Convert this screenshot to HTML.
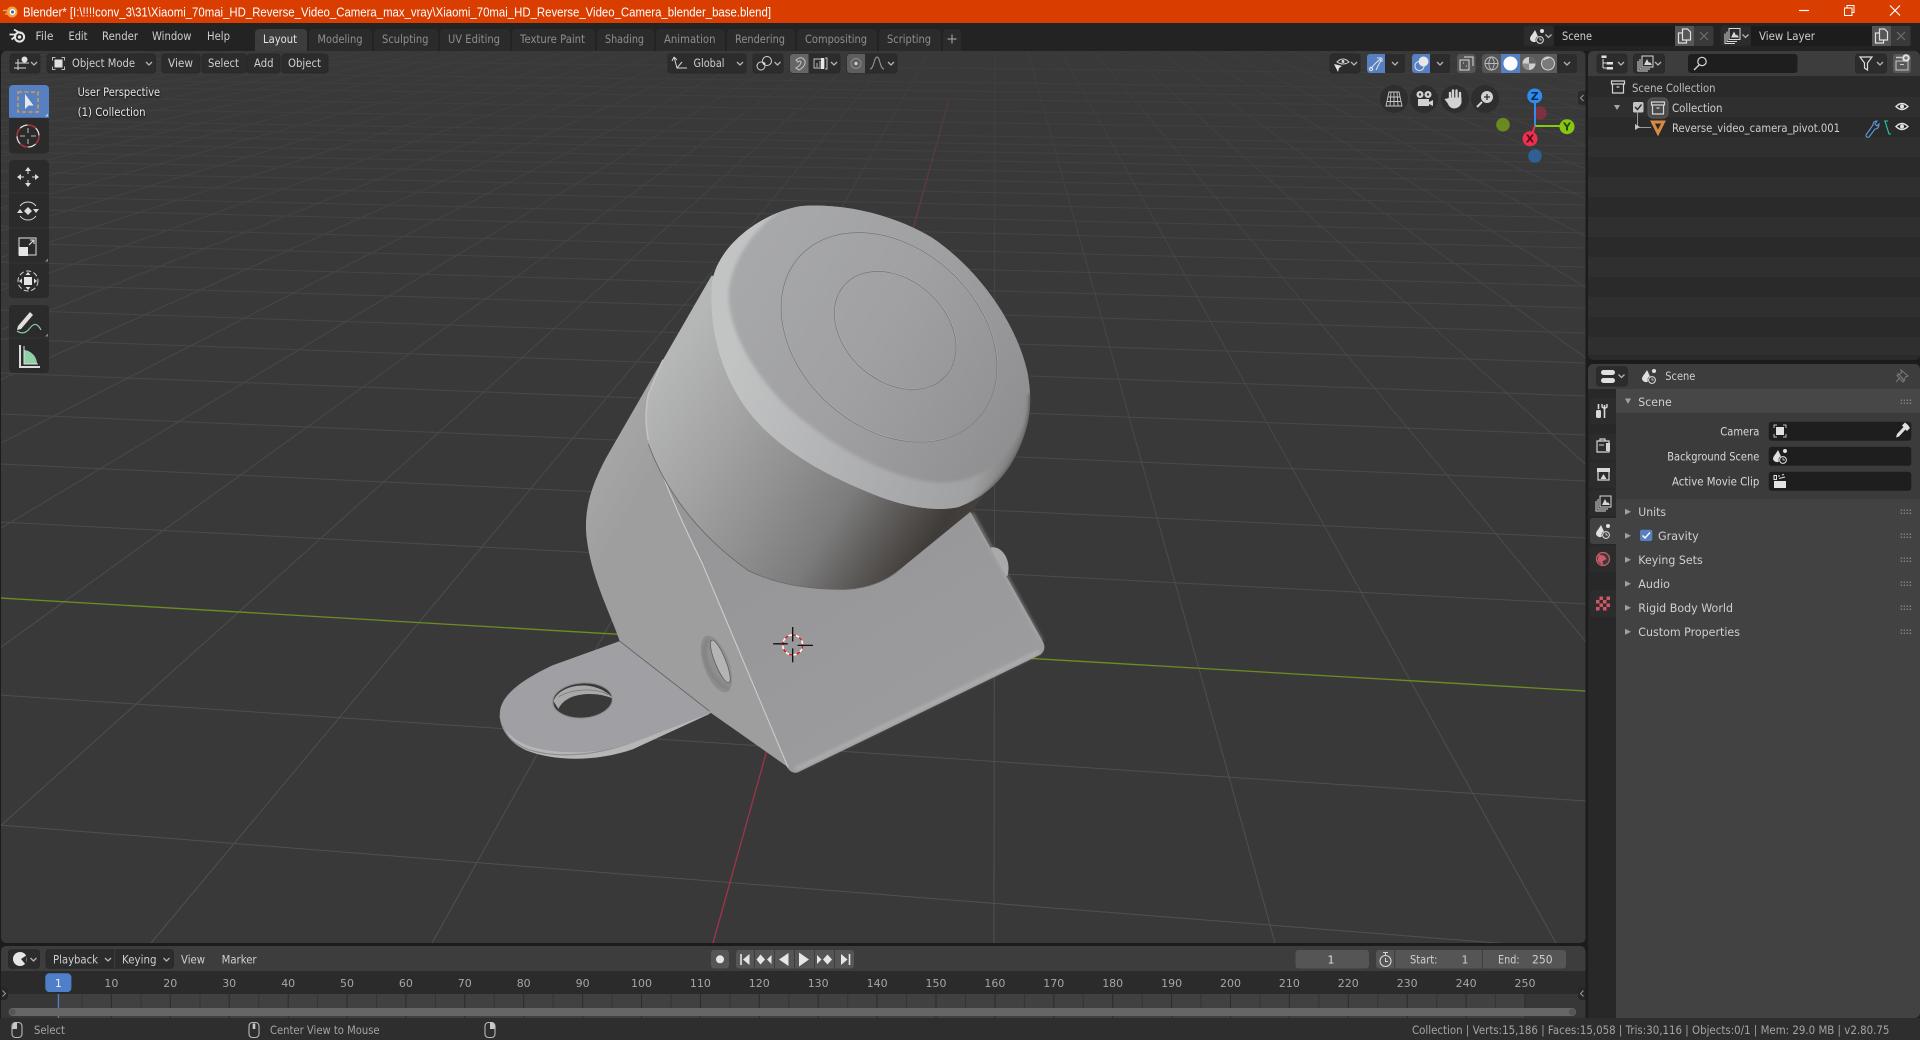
<!DOCTYPE html>
<html><head><meta charset="utf-8"><title>Blender</title>
<style>
html,body{margin:0;padding:0;background:#1c1c1c;width:1920px;height:1040px;overflow:hidden}
svg{display:block}
text{font-family:"DejaVu Sans","Liberation Sans",sans-serif;font-size:11.5px;fill:#cfcfcf}
.t{fill:#8e8e8e}
.f{fill:#a6a6a6;font-size:11px;text-anchor:middle}
.s{fill:#a4a4a4}
.l{filter:drop-shadow(0 1px 1px #000);fill:#e6e6e6}
.ax{font-size:11px;font-weight:bold;text-anchor:middle}
.ic{fill:none;stroke:#d8d8d8;stroke-width:1.3}
.b{fill:#2c2c2c;stroke:#292929}
</style></head><body>
<svg xmlns="http://www.w3.org/2000/svg" width="1920" height="1040" viewBox="0 0 1920 1040">
<defs>
<clipPath id="vp"><rect x="1" y="51" width="1584.5" height="892" rx="5"/></clipPath>
<clipPath id="capc"><path d="M840 68C950 60 1080 90 1180 150C1300 230 1400 370 1430 500C1445 580 1440 640 1400 720C1370 780 1320 830 1250 855C1180 870 1090 850 1000 810C880 760 760 690 690 590C630 500 600 400 605 280C610 180 730 85 840 68Z"/></clipPath>
<linearGradient id="gr" gradientUnits="userSpaceOnUse" x1="0" y1="51" x2="0" y2="943"><stop offset="0" stop-color="#3d3d3d"/><stop offset=".25" stop-color="#454545"/><stop offset=".6" stop-color="#4c4c4c"/><stop offset="1" stop-color="#505050"/></linearGradient>
<linearGradient id="red" gradientUnits="userSpaceOnUse" x1="0" y1="90" x2="0" y2="943"><stop offset="0" stop-color="#4a3a3d"/><stop offset=".2" stop-color="#71383f"/><stop offset="1" stop-color="#a8324c"/></linearGradient>
<linearGradient id="cyl" gradientUnits="userSpaceOnUse" x1="470" y1="520" x2="1225" y2="1007"><stop offset="0" stop-color="#b5b6b6"/><stop offset=".25" stop-color="#a3a3a3"/><stop offset=".45" stop-color="#919191"/><stop offset=".65" stop-color="#7c7c7c"/><stop offset=".82" stop-color="#555250"/><stop offset=".92" stop-color="#3e3b38"/><stop offset="1" stop-color="#47433f"/></linearGradient>
<linearGradient id="rim" gradientUnits="userSpaceOnUse" x1="640" y1="500" x2="1430" y2="760"><stop offset="0" stop-color="#c2c4c4"/><stop offset=".5" stop-color="#aeafb1"/><stop offset=".85" stop-color="#a0a1a2"/><stop offset="1" stop-color="#6e6c6b"/></linearGradient>
<linearGradient id="top" gradientUnits="userSpaceOnUse" x1="680" y1="250" x2="1380" y2="680"><stop offset="0" stop-color="#a7a8aa"/><stop offset=".5" stop-color="#a0a0a2"/><stop offset="1" stop-color="#909092"/></linearGradient>
<linearGradient id="bk" gradientUnits="userSpaceOnUse" x1="280" y1="750" x2="420" y2="830"><stop offset="0" stop-color="#919192"/><stop offset=".15" stop-color="#a6a6a7"/><stop offset="1" stop-color="#9e9e9f"/></linearGradient>
<linearGradient id="pl" gradientUnits="userSpaceOnUse" x1="800" y1="1000" x2="1100" y2="1500"><stop offset="0" stop-color="#979799"/><stop offset="1" stop-color="#9c9c9e"/></linearGradient>
<filter id="bl" x="-20%" y="-20%" width="140%" height="140%"><feGaussianBlur stdDeviation="5"/></filter>
<g id="ch"><path d="M-3-1.5 0 1.5 3-1.5" fill="none" stroke="#b4b4b4" stroke-width="1.3"/></g>
<g id="eye"><path d="M-6 0Q0-6 6 0Q0 6-6 0Z" fill="none" stroke="#e2e2e2" stroke-width="1.4"/><circle r="2" fill="#e2e2e2"/></g>
<g id="scn"><path d="M-2-6C-4-2-7 0-7 3A4 4 0 0 0-1 5.5C-2 3-1 1 1 .5C0-2-1-4-2-6Z" fill="#e0e0e0"/><circle cx="5" cy="-5" r="2" fill="#e0e0e0"/><circle cx="3" cy="4" r="3.4" fill="none" stroke="#e0e0e0"/><path d="M3 2V4H5" fill="none" stroke="#e0e0e0" stroke-width=".8"/></g>
<g id="coll"><path d="M-6.5-6H6.5V-3H-6.5ZM-5.5-3V6H5.5V-3M-1.5 0H1.5" fill="none" stroke="#d4d4d4" stroke-width="1.2"/></g>
<g id="vl"><path d="M-4-7H7V4H-4Z" fill="none" stroke="#d8d8d8"/><path d="M-6-4V6H4M-8-2V8H2" fill="none" stroke="#d8d8d8"/><path d="M-2 2 1-4 3 0 4-1 6 2Z" fill="#d8d8d8"/></g>
<g id="copy"><path d="M-2-7H3L6-4V4H-2ZM-2-3H-6V7H2V4" fill="none" stroke="#e0e0e0" stroke-width="1.2"/></g>
<g id="x"><path d="M-4-4 4 4M4-4-4 4" stroke="#6e6e6e" stroke-width="1.2"/></g>
<g id="obj"><rect x="-4" y="-4" width="8" height="8" fill="#e0e0e0"/><path d="M-6-3V-6H-3M3-6H6V-3M6 3V6H3M-3 6H-6V3" fill="none" stroke="#bdbdbd"/></g>
<g id="gp"><path d="M0 -1.5H10.5M0 1.5H10.5" stroke="#828282" stroke-width="1.5" stroke-dasharray="1.4 1.6"/></g>
<g id="mouse"><rect x="-5" y="-7.5" width="10" height="15" rx="3.5" fill="none" stroke="#b8b8b8" stroke-width="1.1"/></g>
</defs>

<rect width="1920" height="1040" fill="#1c1c1c"/>
<!-- title bar -->
<rect width="1920" height="23" fill="#da3d00"/>
<circle cx="12" cy="12" r="5.5" fill="#f0a040"/><circle cx="12.5" cy="12" r="3" fill="#fff"/><circle cx="12.5" cy="12" r="1.6" fill="#2a6fc0"/><path d="M3 10.5H8M5 14H8" stroke="#f0a040" stroke-width="1.4"/>
<text x="23" y="16.5" textLength="748" lengthAdjust="spacingAndGlyphs" style="font-family:'Liberation Sans',sans-serif;font-size:12.5px;fill:#fff">Blender* [I:\!!!!conv_3\31\Xiaomi_70mai_HD_Reverse_Video_Camera_max_vray\Xiaomi_70mai_HD_Reverse_Video_Camera_blender_base.blend]</text>
<path d="M1799 10.5H1809" stroke="#fff" stroke-width="1.2"/>
<path d="M1844.5 8H1852V15.5H1844.5ZM1847 8V5.5H1854V12.5H1852" fill="none" stroke="#fff"/>
<path d="M1890 5.5 1900 15.5M1900 5.5 1890 15.5" stroke="#fff" stroke-width="1.2"/>

<!-- top bar -->
<rect y="23" width="1920" height="28" fill="#232323"/>
<g fill="none" stroke="#e6e6e6"><circle cx="19.5" cy="37" r="4.6" stroke-width="2"/><path d="M9.5 34.5H16M11.5 39.5 16 36M14 29.5 21 33.5" stroke-width="1.8"/></g><circle cx="19.5" cy="37" r="1.8" fill="#e6e6e6"/>
<text x="35.5" y="40" textLength="18" lengthAdjust="spacingAndGlyphs">File</text>
<text x="68.5" y="40" textLength="19" lengthAdjust="spacingAndGlyphs">Edit</text>
<text x="102" y="40" textLength="36" lengthAdjust="spacingAndGlyphs">Render</text>
<text x="152" y="40" textLength="39.5" lengthAdjust="spacingAndGlyphs">Window</text>
<text x="207" y="40" textLength="23" lengthAdjust="spacingAndGlyphs">Help</text>
<g fill="#2b2b2b">
<path d="M255 51V33a4 4 0 0 1 4-4H303a4 4 0 0 1 4 4V51Z" fill="#3d3d3d"/>
<path d="M309 51V33a4 4 0 0 1 4-4H368a4 4 0 0 1 4 4V51Z"/>
<path d="M374 51V33a4 4 0 0 1 4-4H434a4 4 0 0 1 4 4V51Z"/>
<path d="M440 51V33a4 4 0 0 1 4-4H506a4 4 0 0 1 4 4V51Z"/>
<path d="M512 51V33a4 4 0 0 1 4-4H591a4 4 0 0 1 4 4V51Z"/>
<path d="M597 51V33a4 4 0 0 1 4-4H650a4 4 0 0 1 4 4V51Z"/>
<path d="M656 51V33a4 4 0 0 1 4-4H721a4 4 0 0 1 4 4V51Z"/>
<path d="M727 51V33a4 4 0 0 1 4-4H791a4 4 0 0 1 4 4V51Z"/>
<path d="M797 51V33a4 4 0 0 1 4-4H873a4 4 0 0 1 4 4V51Z"/>
<path d="M879 51V33a4 4 0 0 1 4-4H937a4 4 0 0 1 4 4V51Z"/>
<path d="M943 51V33a4 4 0 0 1 4-4H957a4 4 0 0 1 4 4V51Z"/>
</g>
<text x="263" y="43" textLength="34" lengthAdjust="spacingAndGlyphs" style="fill:#e4e4e4">Layout</text>
<text class="t" x="317.5" y="43" textLength="45" lengthAdjust="spacingAndGlyphs">Modeling</text>
<text class="t" x="382" y="43" textLength="46.5" lengthAdjust="spacingAndGlyphs">Sculpting</text>
<text class="t" x="448" y="43" textLength="52" lengthAdjust="spacingAndGlyphs">UV Editing</text>
<text class="t" x="520" y="43" textLength="65" lengthAdjust="spacingAndGlyphs">Texture Paint</text>
<text class="t" x="605" y="43" textLength="39" lengthAdjust="spacingAndGlyphs">Shading</text>
<text class="t" x="664" y="43" textLength="51.5" lengthAdjust="spacingAndGlyphs">Animation</text>
<text class="t" x="735" y="43" textLength="50" lengthAdjust="spacingAndGlyphs">Rendering</text>
<text class="t" x="805" y="43" textLength="62" lengthAdjust="spacingAndGlyphs">Compositing</text>
<text class="t" x="887" y="43" textLength="44" lengthAdjust="spacingAndGlyphs">Scripting</text>
<path d="M947.5 39H956.5M952 34.5V43.5" stroke="#9a9a9a" stroke-width="1.2"/>

<!-- scene / view layer -->
<rect x="1524" y="26" width="30" height="20" rx="3" class="b"/><use href="#scn" x="1537" y="36"/><use href="#ch" x="1548.5" y="36"/>
<rect x="1554" y="26" width="121" height="20" fill="#1c1c1c"/>
<text x="1562" y="40" textLength="30" lengthAdjust="spacingAndGlyphs">Scene</text>
<rect x="1675" y="26" width="19" height="20" fill="#565656"/><use href="#copy" x="1684.5" y="36"/>
<rect x="1694" y="26" width="19.5" height="20" rx="2" fill="#3a3a3a"/><use href="#x" x="1704" y="36"/>
<rect x="1721" y="26" width="30" height="20" rx="3" class="b"/><use href="#vl" x="1733" y="35.5"/><use href="#ch" x="1745.5" y="36"/>
<rect x="1751" y="26" width="121" height="20" fill="#1c1c1c"/>
<text x="1759" y="40" textLength="56" lengthAdjust="spacingAndGlyphs">View Layer</text>
<rect x="1872" y="26" width="19" height="20" fill="#565656"/><use href="#copy" x="1881.5" y="36"/>
<rect x="1891" y="26" width="19.5" height="20" rx="2" fill="#3a3a3a"/><use href="#x" x="1901" y="36"/>

<!-- 3D viewport -->
<rect x="1" y="51" width="1584.5" height="892" rx="5" fill="#393939"/>
<g clip-path="url(#vp)">
<path fill="none" stroke="url(#gr)" stroke-width="1" d="M995-67L-8560 943M995-67L-8279 943M995-67L-7998 943M995-67L-7717 943M995-67L-7436 943M995-67L-7155 943M995-67L-6874 943M995-67L-6593 943M995-67L-6312 943M995-67L-6031 943M995-67L-5750 943M995-67L-5469 943M995-67L-5188 943M995-67L-4907 943M995-67L-4626 943M995-67L-4345 943M995-67L-4064 943M995-67L-3783 943M995-67L-3502 943M995-67L-3221 943M995-67L-2940 943M995-67L-2659 943M995-67L-2378 943M995-67L-2097 943M995-67L-1816 943M995-67L-1535 943M995-67L-1254 943M995-67L-973 943M995-67L-692 943M995-67L-411 943M995-67L-130 943M995-67L151 943M995-67L432 943M995-67L994 943M995-67L1275 943M995-67L1556 943M995-67L1837 943M995-67L2118 943M995-67L2399 943M995-67L2680 943M995-67L2961 943M995-67L3242 943M995-67L3523 943M995-67L3804 943M995-67L4085 943M995-67L4366 943M995-67L4647 943M995-67L4928 943M995-67L5209 943"/>
<path fill="none" stroke="url(#gr)" stroke-width="1" d="M0 825L1586 950M0 695L1586 801M0 522L1586 604M0 464L1586 538M0 414L1586 481M0 373L1586 435M0 339L1586 396M0 310L1586 363M0 284L1586 333M0 262L1586 308M0 243L1586 286M0 226L1586 267M0 209L1586 248M0 196L1586 233M0 183L1586 218M0 172L1586 205M0 161L1586 193M0 152L1586 182M0 143L1586 172M0 134L1586 163M0 127L1586 154M0 120L1586 146M0 108L1586 132M0 97L1586 120M0 86L1586 108M0 79L1586 99M0 71L1586 90M0 58L1586 75"/>
<path d="M0 598L1586 691" stroke="#6d8d22" stroke-width="1.3" fill="none"/>
<path d="M949 100L713 943" stroke="url(#red)" stroke-width="1.3" fill="none"/>

<!-- model -->
<g transform="translate(480 180) scale(.3827)">
<path d="M1335 960C1365 955 1390 995 1378 1035L1340 1030Z" fill="#a9a9a9"/>
<!-- flange -->
<path d="M600 1395 400 1487C300 1522 190 1518 120 1490C75 1470 50 1430 52 1395L70 1380 580 1350Z" fill="#b6b6b7"/>
<path d="M52 1400C60 1445 80 1470 125 1488C200 1512 300 1505 395 1470L600 1385" fill="none" stroke="#8e8e90" stroke-width="3"/>
<path d="M365 1205 610 1390 400 1470C300 1505 190 1500 125 1478C75 1458 50 1425 52 1390C55 1350 100 1310 190 1268Z" fill="#a0a0a4"/>
<ellipse cx="268" cy="1360" rx="78" ry="46" transform="rotate(-4 268 1360)" fill="#393939" stroke="#8e8e90" stroke-width="3"/>
<path d="M192 1362C205 1318 300 1300 348 1355C300 1335 225 1338 205 1382Z" fill="#a9a9a9"/>
<path d="M205 1350C240 1330 300 1325 335 1345" fill="none" stroke="#77777a" stroke-width="2"/>
<!-- back curved part -->
<path d="M365 1205C340 1130 290 1040 278 930C272 860 290 800 330 725L478 468L800 900L820 1545L600 1390Z" fill="url(#bk)"/>
<!-- plate -->
<path d="M437 660C470 760 520 880 580 1000L800 1530Q812 1553 830 1548L1465 1240Q1482 1225 1470 1205L1280 865L1100 1015Z" fill="url(#pl)"/>
<path d="M825 1540 1462 1232" stroke="#b4b4b6" stroke-width="8" fill="none" filter="url(#bl)"/>
<path d="M1285 870 1468 1205" stroke="#adadaf" stroke-width="5" fill="none" filter="url(#bl)"/>
<path d="M437 660C470 760 520 880 580 1000L805 1535" fill="none" stroke="#cbcbcb" stroke-width="3"/>
<path d="M365 1205 600 1388" fill="none" stroke="#5c5c60" stroke-width="2"/>
<!-- slot -->
<ellipse cx="618" cy="1265" rx="33" ry="78" transform="rotate(-20 618 1265)" fill="#8f8f90"/>
<path d="M597 1198C570 1230 600 1310 648 1330" fill="none" stroke="#707070" stroke-width="4" filter="url(#bl)"/>
<ellipse cx="628" cy="1258" rx="14" ry="60" transform="rotate(-22 628 1258)" fill="#b4b4b5" stroke="#5c5c5c" stroke-width="2"/>
<!-- cylinder -->
<path d="M605 250 478 470 440 560Q428 620 440 690C480 800 560 920 700 1020C780 1060 870 1070 950 1070C1010 1068 1060 1050 1100 1015L1290 860L1400 700L900 300Z" fill="url(#cyl)"/>
<path d="M478 470 440 560Q428 620 440 680" fill="none" stroke="#c4c4c4" stroke-width="4"/>
<path d="M440 690C480 800 560 920 700 1020C780 1060 870 1070 950 1070C1010 1068 1060 1050 1100 1015" fill="none" stroke="#666" stroke-width="2"/>
<!-- cap -->
<g clip-path="url(#capc)">
<path d="M840 68C950 60 1080 90 1180 150C1300 230 1400 370 1430 500C1445 580 1440 640 1400 720C1370 780 1320 830 1250 855C1180 870 1090 850 1000 810C880 760 760 690 690 590C630 500 600 400 605 280C610 180 730 85 840 68Z" fill="url(#rim)"/>
<path d="M850 40C960 40 1090 70 1200 140C1320 225 1410 370 1440 490C1450 580 1425 640 1395 690C1350 760 1270 795 1190 790C1070 780 920 700 800 590C720 510 660 410 650 320C640 230 720 100 850 40Z" fill="url(#top)" filter="url(#bl)"/>
<path d="M1440 560C1445 640 1420 700 1390 745C1360 790 1320 830 1280 855" fill="none" stroke="#5e5c5b" stroke-width="14" filter="url(#bl)"/>
</g>
<ellipse cx="1070" cy="410" rx="315" ry="235" transform="rotate(42 1070 410)" fill="none" stroke="#b4b4b4" stroke-width="1.8" />
<ellipse cx="1069" cy="411" rx="315" ry="235" transform="rotate(42 1069 411)" fill="none" stroke="#737373" stroke-width="1.8"/>
<ellipse cx="1086" cy="392" rx="178" ry="132" transform="rotate(42 1086 392)" fill="none" stroke="#b4b4b4" stroke-width="1.8"/>
<ellipse cx="1085" cy="393" rx="178" ry="132" transform="rotate(42 1085 393)" fill="none" stroke="#737373" stroke-width="1.8"/>
<!-- cursor -->
<circle cx="817" cy="1215" r="26" fill="none" stroke="#fff" stroke-width="4"/>
<circle cx="817" cy="1215" r="26" fill="none" stroke="#d81818" stroke-width="4" stroke-dasharray="10 10"/>
<path d="M817 1168V1206M817 1224V1260M766 1212H804M830 1216H870" stroke="#111" stroke-width="3.5"/>
</g>

<!-- toolbar -->
<path d="M9 117.7V89a4 4 0 0 1 4-4H45a4 4 0 0 1 4 4V117.7Z" fill="#5680c2"/>
<path d="M9 118H49V149.5a4 4 0 0 1-4 4H13a4 4 0 0 1-4-4Z" fill="#2b2b2b"/>
<rect x="9" y="160" width="40" height="138" rx="4" fill="#2b2b2b"/>
<rect x="9" y="305" width="40" height="68" rx="4" fill="#2b2b2b"/>
<path d="M9 193H49M9 228H49M9 263H49M9 338H49" stroke="#343434"/>
<rect x="18" y="92" width="20" height="20" fill="none" stroke="#f0a030" stroke-width="1.3" stroke-dasharray="4 2.5"/>
<path d="M25 94V109L28.5 105.5H33.5Z" fill="#e8e8e8"/>
<path d="M48 116.5V113.5L45 116.5Z" fill="#c0c8d8"/>
<circle cx="28" cy="136" r="11" fill="none" stroke="#e8e8e8" stroke-width="1.2"/>
<circle cx="28" cy="136" r="11" fill="none" stroke="#b02030" stroke-width="1.2" stroke-dasharray="9 8"/>
<path d="M28 128V133M28 139V144M20 136H25M31 136H36" stroke="#9a9a9a" stroke-width="1.3"/>
<path d="M28 167 25 171H31ZM28 187 25 183H31ZM17 177 21 174V180ZM39 177 35 174V180Z" fill="#dcdcdc"/><path d="M28 171V174M28 180V183M21 177H24M32 177H35" stroke="#dcdcdc"/>
<path d="M20 206A10 10 0 0 1 36 206M36 216A10 10 0 0 1 20 216" fill="none" stroke="#d6d6d6"/><path d="M28 207 32 211 28 215 24 211ZM17 213H23L20 209ZM33 209H39L36 213Z" fill="#dcdcdc"/>
<rect x="19" y="238" width="17" height="17" fill="none" stroke="#d0d0d0" stroke-width="1.1"/><rect x="19" y="247" width="9" height="9" fill="#e6e6e6"/><path d="M29 245 34 240M30 240H34V244" fill="none" stroke="#e6e6e6" stroke-width="1.1"/>
<circle cx="28" cy="281" r="10" fill="none" stroke="#d0d0d0" stroke-dasharray="5 2.5"/><rect x="24" y="277" width="8" height="8" fill="#e6e6e6"/><path d="M28 272 25.5 275H30.5ZM28 290 25.5 287H30.5ZM19 281 22 278.5V283.5ZM37 281 34 278.5V283.5Z" fill="#dcdcdc"/>
<path d="M18 326 30 312 33 315 21 329 17 330Z" fill="#e0e0e0"/>
<path d="M17 331Q24 336 30 328T41 330" fill="none" stroke="#86c8a0" stroke-width="1.2"/>
<path d="M48 336.5V333.5L45 336.5Z" fill="#8a8a8a"/><path d="M48 261.5V258.5L45 261.5Z" fill="#8a8a8a"/>
<path d="M20 345V367H40" fill="none" stroke="#dcdcdc" stroke-width="2"/><path d="M24 350A14 14 0 0 1 37 364H24Z" fill="#8fd0a8"/><path d="M24 346V364H38" fill="none" stroke="#dcdcdc"/>

<text class="l" x="77.6" y="96" textLength="82.5" lengthAdjust="spacingAndGlyphs">User Perspective</text>
<text class="l" x="77.6" y="116" textLength="68" lengthAdjust="spacingAndGlyphs">(1) Collection</text>

<!-- viewport header -->
<rect x="10" y="54" width="30" height="19" rx="3" class="b"/>
<path d="M15 63H29M18 59V70M14 68H26" stroke="#d8d8d8" fill="none"/><circle cx="24.5" cy="59.5" r="3" fill="#e0e0e0"/><use href="#ch" x="34" y="63.5"/>
<rect x="47" y="54" width="108.5" height="19" rx="3" class="b"/>
<use href="#obj" x="58.5" y="63.5"/><text x="72" y="67" textLength="63" lengthAdjust="spacingAndGlyphs">Object Mode</text><use href="#ch" x="149" y="63.5"/>
<rect x="162" y="54" width="38" height="19" rx="3" class="b"/><text x="168" y="67" textLength="25" lengthAdjust="spacingAndGlyphs">View</text>
<rect x="202" y="54" width="44" height="19" rx="3" class="b"/><text x="208" y="67" textLength="31" lengthAdjust="spacingAndGlyphs">Select</text>
<rect x="247" y="54" width="33" height="19" rx="3" class="b"/><text x="254" y="67" textLength="19.5" lengthAdjust="spacingAndGlyphs">Add</text>
<rect x="282" y="54" width="46" height="19" rx="3" class="b"/><text x="288" y="67" textLength="33" lengthAdjust="spacingAndGlyphs">Object</text>

<rect x="668" y="54" width="78" height="19" rx="3" class="b"/>
<path d="M674 57 677 68H687M674 57 672 61M674 57 677 60M677 68 682 62" fill="none" stroke="#d4d4d4"/><text x="693.5" y="67" textLength="31" lengthAdjust="spacingAndGlyphs">Global</text><use href="#ch" x="740" y="63.5"/>
<rect x="753" y="54" width="30" height="19" rx="3" class="b"/><circle cx="761" cy="66" r="4" fill="none" stroke="#d4d4d4"/><circle cx="767" cy="61" r="4.5" fill="none" stroke="#d4d4d4"/><circle cx="764" cy="63.5" r="1.3" fill="#e4e4e4"/><use href="#ch" x="777.5" y="63.5"/>
<rect x="790" y="54" width="50" height="19" rx="3" class="b"/><path d="M790 57a3 3 0 0 1 3-3H808.5V73H793a3 3 0 0 1-3-3Z" fill="#666"/>
<path d="M796 60Q802 55 805 61Q806 66 799 70L796 68Q801 65 801 62Q800 60 798 62Z" fill="none" stroke="#c4c4c4"/>
<path d="M814 59H824V68H814ZM817 67V63M820 67V61" fill="none" stroke="#c4c4c4" stroke-width=".9"/><rect x="821" y="58" width="3" height="11" fill="#e8e8e8"/><path d="M825 58H827V69H825" fill="none" stroke="#c4c4c4"/><use href="#ch" x="834" y="63.5"/>
<rect x="847" y="54" width="50" height="19" rx="3" class="b"/><path d="M847 57a3 3 0 0 1 3-3H865V73H850a3 3 0 0 1-3-3Z" fill="#5e5e5e"/>
<circle cx="856" cy="63.5" r="5" fill="none" stroke="#8a8a8a"/><circle cx="856" cy="63.5" r="1.6" fill="#d0d0d0"/>
<path d="M870 69C874 69 874 57 877 57C880 57 880 69 884 69" fill="none" stroke="#9a9a9a"/><use href="#ch" x="891" y="63.5"/>

<rect x="1330" y="54" width="30" height="19" rx="3" class="b"/>
<path d="M1337 62Q1343 56 1349 62Q1343 66 1337 62Z" fill="none" stroke="#d8d8d8"/><circle cx="1343" cy="61.5" r="1.5" fill="#d8d8d8"/><path d="M1334 64 1342 66 1339 68 1338 72Z" fill="#e4e4e4"/><use href="#ch" x="1354" y="63.5"/>
<path d="M1370 54H1385V73H1370a3 3 0 0 1-3-3V57a3 3 0 0 1 3-3Z" fill="#5680c2"/><rect x="1385" y="54" width="20" height="19" rx="2" fill="#2c2c2c"/>
<path d="M1370.5 69Q1378 60 1381 59M1376 70Q1378 66 1381 60" fill="none" stroke="#e4e4e4"/><path d="M1382 58H1377M1382 58V62" fill="none" stroke="#e4e4e4"/><circle cx="1371" cy="69" r="1.7" fill="none" stroke="#e4e4e4"/><use href="#ch" x="1395" y="63.5"/>
<path d="M1415 54H1430V73H1415a3 3 0 0 1-3-3V57a3 3 0 0 1 3-3Z" fill="#5680c2"/><rect x="1430" y="54" width="20" height="19" rx="2" fill="#2c2c2c"/>
<circle cx="1423.5" cy="61.5" r="5" fill="#e6e6e6"/><circle cx="1419.5" cy="66" r="4.6" fill="none" stroke="#e6e6e6"/><use href="#ch" x="1440" y="63.5"/>
<rect x="1457" y="54" width="18.5" height="19" rx="3" fill="#555"/><path d="M1464 57H1473V66M1460 60H1469V70H1460Z" fill="none" stroke="#dadada"/><path d="M1463 63H1464M1466 66H1467" stroke="#dadada"/>
<rect x="1482" y="54" width="95" height="19" rx="3" fill="#2c2c2c"/>
<path d="M1485 54H1501V73H1485a3 3 0 0 1-3-3V57a3 3 0 0 1 3-3Z" fill="#545454"/><rect x="1501" y="54" width="19" height="19" fill="#5680c2"/><rect x="1520" y="54" width="37" height="19" fill="#5c5c5c"/>
<circle cx="1491.5" cy="63.5" r="6.5" fill="none" stroke="#bbb"/><path d="M1485 63.5H1498M1491.5 57C1488 60 1488 67 1491.5 70C1495 67 1495 60 1491.5 57Z" fill="none" stroke="#bbb" stroke-width=".9"/>
<circle cx="1510.5" cy="63.5" r="7" fill="#fff"/>
<circle cx="1529" cy="63.5" r="6.5" fill="#cfcfcf"/><path d="M1529 63.5V57A6.5 6.5 0 0 1 1535.5 63.5Z" fill="#666"/><path d="M1529 63.5H1522.5A6.5 6.5 0 0 0 1529 70Z" fill="#8c8c8c"/>
<circle cx="1548" cy="63.5" r="6.5" fill="#7a7a7a" stroke="#d4d4d4"/><path d="M1544 60Q1546 58 1549 58" fill="none" stroke="#e0e0e0"/>
<use href="#ch" x="1567" y="63.5"/>

<!-- gizmos -->
<circle cx="1394" cy="99" r="14" fill="#2e2e2e"/><path d="M1389 92H1399L1402 106H1386ZM1394 92V106M1388 97H1400M1387 101.5H1401M1391 92 1390 106M1397 92 1398 106" fill="none" stroke="#c8c8c8" stroke-width=".9"/>
<circle cx="1424" cy="99" r="14" fill="#2e2e2e"/><circle cx="1420" cy="94.5" r="3.5" fill="#d2d2d2"/><circle cx="1428" cy="94.5" r="3.5" fill="#d2d2d2"/><circle cx="1420" cy="94.5" r="1.2" fill="#2e2e2e"/><circle cx="1428" cy="94.5" r="1.2" fill="#2e2e2e"/><rect x="1418" y="99" width="11" height="7" fill="#d2d2d2"/><path d="M1429 102 1433 100V106L1429 104Z" fill="#d2d2d2"/>
<circle cx="1455" cy="99" r="14" fill="#2e2e2e"/><path d="M1450 100V93M1453 99V90.5M1456.5 99V90.5M1460 100V93" stroke="#d2d2d2" stroke-width="2.4" stroke-linecap="round"/><path d="M1449 98H1461V103Q1459 108 1454 108Q1450 108 1448 103L1445 99" fill="#d2d2d2" stroke="#d2d2d2"/>
<circle cx="1485" cy="99" r="14" fill="#2e2e2e"/><circle cx="1487" cy="97" r="6" fill="#d2d2d2"/><path d="M1482 102 1477 107" stroke="#d2d2d2" stroke-width="2"/><path d="M1484 97H1490M1487 94V100" stroke="#2e2e2e" stroke-width="1.3"/>

<circle cx="1540" cy="113" r="6.8" fill="#7d3040"/><circle cx="1503" cy="124.7" r="6.8" fill="#6a8a20"/><circle cx="1535" cy="156" r="6.8" fill="#2f5f95"/>
<path d="M1535 126V102" stroke="#2e8cf0" stroke-width="2"/><path d="M1535 126H1560" stroke="#86c810" stroke-width="2"/><path d="M1535 126 1532 134" stroke="#f02f50" stroke-width="2"/>
<circle cx="1534.7" cy="96" r="7.5" fill="#2e8cf0"/><text class="ax" x="1534.7" y="100" style="fill:#0e2c50">Z</text>
<circle cx="1567" cy="126.7" r="7.5" fill="#86c810"/><text class="ax" x="1567" y="130.7" style="fill:#2c4404">Y</text>
<circle cx="1530" cy="138.7" r="7.5" fill="#f02f50"/><text class="ax" x="1530" y="142.7" style="fill:#500f1a">X</text>
<path d="M1585.5 91H1581a3 3 0 0 0-3 3V102a3 3 0 0 0 3 3H1585.5Z" fill="#2a2a2a"/><path d="M1583.5 95 1580.5 98 1583.5 101" fill="none" stroke="#9a9a9a"/>
</g>

<!-- outliner -->
<rect x="1588" y="51" width="332" height="309" rx="5" fill="#2a2a2a"/>
<path d="M1588 76V56a5 5 0 0 1 5-5H1915a5 5 0 0 1 5 5V76Z" fill="#3d3d3d"/>
<rect x="1588" y="97" width="332" height="20" fill="#2f2f2f"/><rect x="1588" y="137" width="332" height="20" fill="#2f2f2f"/><rect x="1588" y="177" width="332" height="20" fill="#2f2f2f"/><rect x="1588" y="217" width="332" height="20" fill="#2f2f2f"/><rect x="1588" y="257" width="332" height="20" fill="#2f2f2f"/><rect x="1588" y="297" width="332" height="20" fill="#2f2f2f"/><rect x="1588" y="337" width="332" height="18" fill="#2f2f2f"/>
<rect x="1597" y="54" width="30" height="19" rx="3" class="b"/>
<path d="M1603 59V68M1603 63H1606M1603 68H1606" fill="none" stroke="#d8d8d8"/><path d="M1601.5 55.5H1606.5V58H1601.5ZM1606.5 62H1613V64.5H1606.5ZM1606.5 67H1613V69.5H1606.5Z" fill="#e0e0e0"/><use href="#ch" x="1621" y="63.5"/>
<rect x="1633.5" y="54" width="31" height="19" rx="3" class="b"/><use href="#vl" x="1646" y="63"/><use href="#ch" x="1658" y="63.5"/>
<rect x="1688" y="54" width="109.5" height="19" rx="3" fill="#1e1e1e"/>
<circle cx="1702" cy="61.5" r="4.2" fill="none" stroke="#d8d8d8" stroke-width="1.2"/><path d="M1699 65 1694 70" stroke="#d8d8d8" stroke-width="1.3"/>
<rect x="1855.5" y="54" width="31" height="19" rx="3" class="b"/><path d="M1860 57H1872L1867.5 63V70L1864.5 68V63Z" fill="none" stroke="#dcdcdc" stroke-width="1.2"/><use href="#ch" x="1880" y="63.5"/>
<rect x="1893" y="54" width="18" height="19" rx="3" fill="#595959"/><path d="M1896 61H1908V70H1896ZM1900 64.5H1904" fill="none" stroke="#c8c8c8"/><path d="M1896 57.5H1902" stroke="#c8c8c8" stroke-width="1.5"/><circle cx="1906" cy="58" r="3.8" fill="#e0e0e0"/><path d="M1904 58H1908M1906 56V60" stroke="#595959"/>

<use href="#coll" x="1618" y="87"/><text x="1632" y="92" textLength="83.5" lengthAdjust="spacingAndGlyphs" style="fill:#bdbdbd">Scene Collection</text>
<path d="M1614 105H1620L1617 110Z" fill="#a8a8a8"/>
<rect x="1633" y="102" width="10.5" height="10.5" rx="1.5" fill="#c4c4c4"/><path d="M1635 107 1637.5 109.5 1641.5 104.5" fill="none" stroke="#222" stroke-width="1.4"/>
<rect x="1648" y="98" width="20" height="20" rx="5" fill="#494949" stroke="#5c5c5c"/><use href="#coll" x="1658" y="108"/>
<text x="1672" y="112" textLength="50.5" lengthAdjust="spacingAndGlyphs">Collection</text>
<use href="#eye" x="1902" y="106.5"/>
<path d="M1637.5 112V127.5H1651" fill="none" stroke="#9a9a9a"/><path d="M1635 124V130L1640 127Z" fill="#c4c4c4"/>
<path d="M1652.5 122H1663.5L1658 133Z" fill="none" stroke="#d98a42" stroke-width="3"/>
<text x="1672" y="132" textLength="168" lengthAdjust="spacingAndGlyphs">Reverse_video_camera_pivot.001</text>
<path d="M1866 135 1873 125Q1873 121 1877 121L1875 124 1877 126 1879 124Q1879 129 1875 129L1869 137Q1866 138 1866 135Z" fill="none" stroke="#5c9ce0" stroke-width="1.1"/>
<path d="M1884 121H1888M1885 121 1889 134H1891" fill="none" stroke="#20d0a0" stroke-width="1.1"/>
<use href="#eye" x="1902" y="126.5"/>

<!-- properties -->
<path d="M1588 1018V369a5 5 0 0 1 5-5H1915a5 5 0 0 1 5 5V1013a5 5 0 0 1-5 5Z" fill="#282828"/>
<path d="M1616 389H1920V1013a5 5 0 0 1-5 5H1616Z" fill="#424242"/>
<path d="M1588 389V369a5 5 0 0 1 5-5H1915a5 5 0 0 1 5 5V389Z" fill="#3d3d3d"/>
<rect x="1616" y="389" width="304" height="24" fill="#474747"/><rect x="1616" y="413" width="304" height="86" fill="#3b3b3b"/>
<rect x="1596.7" y="366.7" width="30.6" height="19.3" rx="3" class="b"/>
<rect x="1601" y="370" width="14" height="5" rx="2.5" fill="#e0e0e0"/><rect x="1601" y="378" width="14" height="5" rx="2.5" fill="#e0e0e0"/><use href="#ch" x="1621.5" y="376"/>
<use href="#scn" x="1649" y="376"/>
<text x="1665.3" y="380" textLength="30" lengthAdjust="spacingAndGlyphs">Scene</text>
<path d="M1896 382 1899.5 378M1897.5 373 1905 381M1901 370 1908 376 1905.5 377 1903 382 1897 375.5 1901.5 373Z" fill="none" stroke="#7c7c7c"/>
<g fill="#2c2c2c"><path d="M1616 398H1593a3 3 0 0 0-3 3V421a3 3 0 0 0 3 3H1616Z"/><path d="M1616 434H1593a3 3 0 0 0-3 3V457a3 3 0 0 0 3 3H1616Z"/><path d="M1616 462H1593a3 3 0 0 0-3 3V485a3 3 0 0 0 3 3H1616Z"/><path d="M1616 490H1593a3 3 0 0 0-3 3V513a3 3 0 0 0 3 3H1616Z"/><path d="M1616 518H1593a3 3 0 0 0-3 3V541a3 3 0 0 0 3 3H1616Z" fill="#424242"/><path d="M1616 546H1593a3 3 0 0 0-3 3V569a3 3 0 0 0 3 3H1616Z"/><path d="M1616 590H1593a3 3 0 0 0-3 3V614a3 3 0 0 0 3 3H1616Z"/></g>
<path d="M1598.5 404V409M1604.5 405V418" stroke="#d8d8d8" stroke-width="1.6"/><rect x="1596" y="410" width="5" height="8" rx="1.5" fill="#d8d8d8"/><path d="M1602 404V407L1604.5 408.5L1607 407V404" fill="none" stroke="#d8d8d8" stroke-width="1.4"/>
<path d="M1597 441H1609V452H1597ZM1600 441V439H1605V441" fill="none" stroke="#d4d4d4" stroke-width="1.2"/><path d="M1599 445H1604" stroke="#d4d4d4"/><rect x="1606" y="443" width="4" height="8" fill="#d4d4d4"/>
<rect x="1597" y="468" width="13" height="4" fill="#d8d8d8"/><path d="M1598 472V480H1609V472" fill="none" stroke="#d8d8d8" stroke-width="1.2"/><path d="M1600.5 479 1603.5 474 1606.5 479Z" fill="#d8d8d8"/>
<use href="#vl" x="1604" y="503" />
<use href="#scn" x="1603" y="531"/>
<circle cx="1603" cy="559" r="6.5" fill="#3a3a3a" stroke="#c85a6a" stroke-width="1.3"/><path d="M1599 555 1604 556 1606 559 1602 561 1603 565 1598 561ZM1606 553 1609 556" fill="#c85a6a" stroke="#c85a6a" stroke-width=".8"/>
<g fill="#c85a6a"><rect x="1596" y="596.5" width="14" height="14"/></g><path d="M1596 596.5h3.5v3.5h-3.5zM1603 596.5h3.5v3.5h-3.5zM1599.5 600h3.5v3.5h-3.5zM1606.5 600h3.5v3.5h-3.5zM1596 603.5h3.5v3.5h-3.5zM1603 603.5h3.5v3.5h-3.5zM1599.5 607h3.5v3.5h-3.5zM1606.5 607h3.5v3.5h-3.5z" fill="#3a2a2e"/>

<path d="M1625 398.5H1631L1628 404Z" fill="#a0a0a0"/>
<text x="1638.3" y="406" textLength="33.4" lengthAdjust="spacingAndGlyphs">Scene</text><use href="#gp" x="1900.7" y="401.7"/>
<text x="1720.3" y="435.5" textLength="39" lengthAdjust="spacingAndGlyphs" style="fill:#d8d8d8">Camera</text>
<text x="1667.3" y="460.5" textLength="92" lengthAdjust="spacingAndGlyphs" style="fill:#d8d8d8">Background Scene</text>
<text x="1672" y="485.5" textLength="87.3" lengthAdjust="spacingAndGlyphs" style="fill:#d8d8d8">Active Movie Clip</text>
<rect x="1768.7" y="421.7" width="142.6" height="19" rx="3" fill="#1e1e1e"/><rect x="1768.7" y="446.7" width="142.6" height="19" rx="3" fill="#1e1e1e"/><rect x="1768.7" y="471.7" width="142.6" height="19" rx="3" fill="#1e1e1e"/>
<use href="#obj" x="1780" y="431"/>
<path d="M1908 425 1905 422.5 1902 425.5 1903.5 427 1897 434 1896 437.5 1899 436.5 1905.5 429.5 1907 431 1910 428Z" fill="#e0e0e0"/>
<use href="#scn" x="1780" y="456"/>
<path d="M1774 481H1786V488H1774Z" fill="#e4e4e4"/><path d="M1774 475.5V479.5H1776.5V475.5ZM1778 476 1780 476M1782 475 1784 474.5M1779 478.5 1785 477" stroke="#e4e4e4" fill="none"/>

<g fill="#a0a0a0"><path d="M1625 508.7V514.7L1631 511.7Z"/><path d="M1625 532.7V538.7L1631 535.7Z"/><path d="M1625 556.7V562.7L1631 559.7Z"/><path d="M1625 580.7V586.7L1631 583.7Z"/><path d="M1625 604.7V610.7L1631 607.7Z"/><path d="M1625 628.7V634.7L1631 631.7Z"/></g>
<text x="1638.3" y="516" textLength="27.7" lengthAdjust="spacingAndGlyphs">Units</text><use href="#gp" x="1900.7" y="511.7"/>
<rect x="1640" y="529.7" width="12.3" height="11.3" rx="2" fill="#5680c2"/><path d="M1642.5 535.5 1645 538 1650 532.5" fill="none" stroke="#fff" stroke-width="1.4"/>
<text x="1658" y="540" textLength="40.7" lengthAdjust="spacingAndGlyphs">Gravity</text><use href="#gp" x="1900.7" y="535.7"/>
<text x="1638.3" y="564" textLength="64.4" lengthAdjust="spacingAndGlyphs">Keying Sets</text><use href="#gp" x="1900.7" y="559.7"/>
<text x="1638.3" y="588" textLength="31.7" lengthAdjust="spacingAndGlyphs">Audio</text><use href="#gp" x="1900.7" y="583.7"/>
<text x="1638.3" y="612" textLength="94.7" lengthAdjust="spacingAndGlyphs">Rigid Body World</text><use href="#gp" x="1900.7" y="607.7"/>
<text x="1638.3" y="636" textLength="101.7" lengthAdjust="spacingAndGlyphs">Custom Properties</text><use href="#gp" x="1900.7" y="631.7"/>

<!-- timeline -->
<path d="M1 1018V951a5 5 0 0 1 5-5H1580.5a5 5 0 0 1 5 5V1013a5 5 0 0 1-5 5Z" fill="#3d3d3d"/>
<rect x="1" y="971" width="1584.5" height="23" fill="#2b2b2b"/>
<rect x="1" y="994" width="1584.5" height="24" fill="#373737"/><rect x="58.4" y="994" width="1466.6" height="24" fill="#414141"/>
<path stroke="#2c2c2c" stroke-width="1" d="M111.4 994V1018M170.3 994V1018M229.2 994V1018M288.2 994V1018M347 994V1018M405.9 994V1018M464.8 994V1018M523.7 994V1018M582.6 994V1018M641.5 994V1018M700.4 994V1018M759.3 994V1018M818.2 994V1018M877.1 994V1018M936 994V1018M994.9 994V1018M1053.8 994V1018M1112.7 994V1018M1171.6 994V1018M1230.5 994V1018M1289.4 994V1018M1348.3 994V1018M1407.2 994V1018M1466.1 994V1018M1525 994V1018"/>
<path stroke="#353535" stroke-width="1" d="M82 994V1008M141 994V1008M200 994V1008M258.7 994V1008M317.6 994V1008M376.5 994V1008M435.4 994V1008M494.3 994V1008M553.2 994V1008M612 994V1008M671 994V1008M729.9 994V1008M788.8 994V1008M847.7 994V1008M906.6 994V1008M965.5 994V1008M1024.4 994V1008M1083.3 994V1008M1142.2 994V1008M1201 994V1008M1260 994V1008M1318.9 994V1008M1377.8 994V1008M1436.7 994V1008M1495.6 994V1008M1554 994V1008M23 994V1008"/>
<path d="M58.4 994V1018" stroke="#4f7fc8" stroke-width="1.4"/>
<rect x="8.6" y="1008" width="1567.4" height="8" rx="4" fill="#666"/><circle cx="12.5" cy="1012" r="3.2" fill="#555"/><circle cx="1572" cy="1012" r="3.2" fill="#555"/>
<rect x="45.3" y="973.3" width="26.1" height="18.7" rx="4" fill="#4f7fc8"/><text x="58.4" y="987" style="fill:#f0f0f0;font-size:11px;text-anchor:middle">1</text>
<g>
<text class="f" x="111.4" y="987">10</text><text class="f" x="170.3" y="987">20</text><text class="f" x="229.2" y="987">30</text><text class="f" x="288.2" y="987">40</text><text class="f" x="347" y="987">50</text><text class="f" x="405.9" y="987">60</text><text class="f" x="464.8" y="987">70</text><text class="f" x="523.7" y="987">80</text><text class="f" x="582.6" y="987">90</text><text class="f" x="641.5" y="987">100</text><text class="f" x="700.4" y="987">110</text><text class="f" x="759.3" y="987">120</text><text class="f" x="818.2" y="987">130</text><text class="f" x="877.1" y="987">140</text><text class="f" x="936" y="987">150</text><text class="f" x="994.9" y="987">160</text><text class="f" x="1053.8" y="987">170</text><text class="f" x="1112.7" y="987">180</text><text class="f" x="1171.6" y="987">190</text><text class="f" x="1230.5" y="987">200</text><text class="f" x="1289.4" y="987">210</text><text class="f" x="1348.3" y="987">220</text><text class="f" x="1407.2" y="987">230</text><text class="f" x="1466.1" y="987">240</text><text class="f" x="1525" y="987">250</text>
</g>
<path d="M1 987H4a4 4 0 0 1 4 4V996a4 4 0 0 1-4 4H1Z" fill="#262626"/><path d="M2.5 990.5 5.5 993.5 2.5 996.5" fill="none" stroke="#9a9a9a"/>
<path d="M1585.5 987H1582a4 4 0 0 0-4 4V996a4 4 0 0 0 4 4H1585.5Z" fill="#262626"/><path d="M1583.5 990.5 1580.5 993.5 1583.5 996.5" fill="none" stroke="#9a9a9a"/>
<rect x="8.5" y="949.7" width="31" height="18.6" rx="3" class="b"/><circle cx="20" cy="959" r="7" fill="#e6e6e6"/><path d="M27 955 21 959 26 965" fill="#2c2c2c"/><use href="#ch" x="33.5" y="959.5"/>
<rect x="46" y="949.7" width="127.5" height="18.6" rx="3" class="b"/><path d="M114.7 950V968" stroke="#3d3d3d"/>
<text x="53" y="963.3" textLength="45" lengthAdjust="spacingAndGlyphs">Playback</text><use href="#ch" x="108" y="959.5"/>
<text x="122" y="963.3" textLength="34.5" lengthAdjust="spacingAndGlyphs">Keying</text><use href="#ch" x="166.5" y="959.5"/>
<text x="181" y="963.3" textLength="24" lengthAdjust="spacingAndGlyphs">View</text>
<text x="221.6" y="963.3" textLength="35" lengthAdjust="spacingAndGlyphs">Marker</text>
<rect x="711" y="950" width="18" height="18.5" rx="3" fill="#555"/><circle cx="720" cy="959.3" r="4" fill="#e6e6e6"/>
<rect x="736" y="950" width="118" height="18.5" rx="3" fill="#555"/>
<path d="M754.5 950V968.5M774.5 950V968.5M794.5 950V968.5M814.5 950V968.5M834.5 950V968.5" stroke="#3d3d3d"/>
<path d="M741 954V965" stroke="#e6e6e6" stroke-width="1.6"/><path d="M743 959.5 749.5 954V965Z" fill="#e6e6e6"/>
<path d="M760.5 954.5 765 959.5 760.5 964.5 756.5 959.5ZM771.5 955V964L767 959.5Z" fill="#e6e6e6"/>
<path d="M779 959.5 788.5 953V966Z" fill="#e6e6e6"/>
<path d="M799 952.5 809 959.5 799 966.5Z" fill="#e6e6e6"/>
<path d="M817 955V964L821.5 959.5ZM827.5 954.5 832 959.5 827.5 964.5 823 959.5Z" fill="#e6e6e6"/>
<path d="M849.5 954V965" stroke="#e6e6e6" stroke-width="1.6"/><path d="M847.5 959.5 841 954V965Z" fill="#e6e6e6"/>
<rect x="1295.5" y="950" width="73.5" height="18.5" rx="3" fill="#555"/><text x="1331" y="963.3" style="text-anchor:middle;fill:#dcdcdc;font-size:11px">1</text>
<rect x="1376" y="950" width="190" height="18.5" rx="3" fill="#555"/><path d="M1394.7 950V968.5M1482.4 950V968.5" stroke="#3d3d3d"/>
<circle cx="1385.5" cy="961" r="5.5" fill="none" stroke="#d8d8d8" stroke-width="1.1"/><path d="M1385.5 958V961.5H1388M1383 952.5H1388M1385.5 952.5V955.5" fill="none" stroke="#d8d8d8"/>
<text x="1410" y="963.3" textLength="27.5" lengthAdjust="spacingAndGlyphs">Start:</text><text x="1465" y="963.3" style="text-anchor:middle;font-size:11px">1</text>
<text x="1498" y="963.3" textLength="21.6" lengthAdjust="spacingAndGlyphs">End:</text><text x="1532" y="963.3" textLength="20.6" lengthAdjust="spacingAndGlyphs">250</text>

<!-- status bar -->
<rect y="1018" width="1920" height="22" fill="#2e2e2e"/>
<use href="#mouse" x="17" y="1030"/><path d="M13 1024.5a3.5 3.5 0 0 1 3.5-2.5H17V1029H12Z" fill="#c8c8c8"/>
<text class="s" x="34" y="1034" textLength="31" lengthAdjust="spacingAndGlyphs">Select</text>
<use href="#mouse" x="254" y="1030"/><rect x="252.7" y="1023.5" width="2.6" height="5.5" fill="#c8c8c8"/>
<text class="s" x="270" y="1034" textLength="109.6" lengthAdjust="spacingAndGlyphs">Center View to Mouse</text>
<use href="#mouse" x="490" y="1030"/><path d="M490 1022H491a3.5 3.5 0 0 1 3.5 2.5V1029H490Z" fill="#c8c8c8"/>
<text class="s" x="1412" y="1034" textLength="477.4" lengthAdjust="spacingAndGlyphs">Collection | Verts:15,186 | Faces:15,058 | Tris:30,116 | Objects:0/1 | Mem: 29.0 MB | v2.80.75</text>
</svg>
</body></html>
